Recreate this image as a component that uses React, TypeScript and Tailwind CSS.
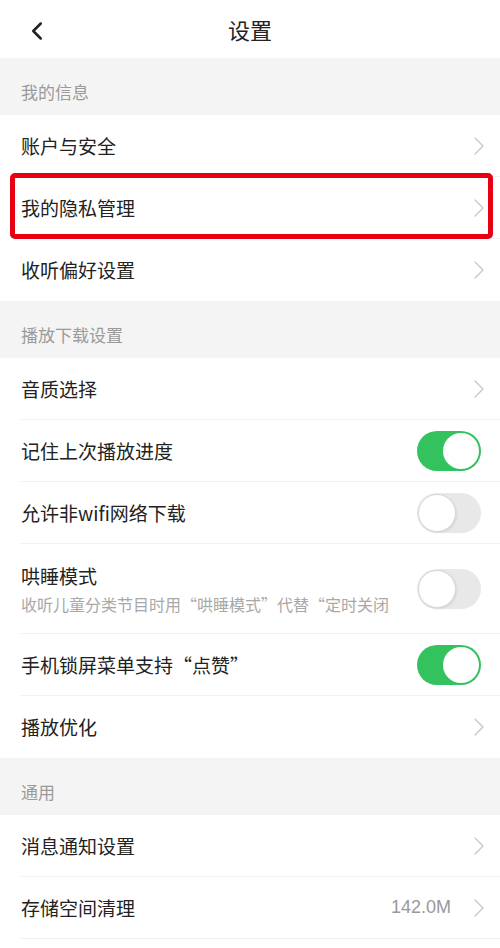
import { ChevronLeft, ChevronRight } from "lucide-react";

const font = { fontFamily: '"Noto Sans CJK SC", "Noto Sans", sans-serif' };

function Section({ title }: { title: string }) {
  return (
    <div className="h-[57px] bg-[#f4f4f4] flex items-center pt-[10px] pl-[21px] text-[17px] text-[#9a9a9a]">
      {title}
    </div>
  );
}

function Toggle({ on }: { on: boolean }) {
  return on ? (
    <div className="w-[64px] h-[40px] rounded-full bg-[#34c25e] flex items-center justify-end pr-[2px]">
      <div className="w-[36px] h-[36px] rounded-full bg-white" />
    </div>
  ) : (
    <div className="w-[64px] h-[40px] rounded-full bg-[#e8e8e8] flex items-center pl-[1px]">
      <div className="w-[38px] h-[38px] rounded-full bg-white border border-[#d8d8d8] shadow-[1px_1px_2px_rgba(0,0,0,0.08)]" />
    </div>
  );
}

function Row({
  label,
  sub,
  toggle,
  value,
  divider = true,
  highlight = false,
  tall = false,
}: {
  label: string;
  sub?: string;
  toggle?: boolean;
  value?: string;
  divider?: boolean;
  highlight?: boolean;
  tall?: boolean;
}) {
  return (
    <div className="relative bg-white">
      <div
        className={`flex items-center justify-between pl-[21px] ${toggle !== undefined ? "pr-[19px]" : "pr-[5px]"} ${tall ? "h-[89px]" : "h-[61px]"}`}
      >
        <div className="flex flex-col">
          <span className="text-[19px] text-[#222] leading-[26px]">{label}</span>
          {sub && (
            <span className="text-[16px] text-[#a8a8a8] leading-[22px] mt-[4px] whitespace-nowrap">{sub}</span>
          )}
        </div>
        {toggle !== undefined ? (
          <Toggle on={toggle} />
        ) : (
          <div className="flex items-center">
            {value && (
              <span className="text-[18px] text-[#999] mr-[12px]" style={{ fontFamily: '"Liberation Sans", sans-serif' }}>
                {value}
              </span>
            )}
            <ChevronRight className="w-[32px] h-[32px] -mr-[0px] text-[#c8c8c8]" strokeWidth={1} />
          </div>
        )}
      </div>
      <div className={`ml-[21px] h-px ${divider ? "bg-[#f0f0f0]" : "bg-white"}`} />
      {highlight && (
        <div className="absolute left-[10px] right-[7px] top-[-4px] bottom-[0px] border-[5px] border-[#e60012] rounded-[5px]" />
      )}
    </div>
  );
}

export default function App() {
  return (
    <div className="w-[500px] h-[948px] bg-white overflow-hidden" style={font}>
      <div className="h-[58px] relative flex items-center justify-center">
        <ChevronLeft className="absolute left-[22px] top-[16px] w-[30px] h-[30px] text-[#222]" strokeWidth={2} />
        <span className="text-[22px] text-[#222]">设置</span>
      </div>
      <Section title="我的信息" />
      <Row label="账户与安全" />
      <Row label="我的隐私管理" highlight />
      <Row label="收听偏好设置" divider={false} />
      <Section title="播放下载设置" />
      <Row label="音质选择" />
      <Row label="记住上次播放进度" toggle={true} />
      <Row label="允许非wifi网络下载" toggle={false} />
      <Row label="哄睡模式" sub="收听儿童分类节目时用“哄睡模式”代替“定时关闭" toggle={false} tall />
      <Row label="手机锁屏菜单支持“点赞”" toggle={true} />
      <Row label="播放优化" divider={false} />
      <Section title="通用" />
      <Row label="消息通知设置" />
      <Row label="存储空间清理" value="142.0M" />
      <Row label="" divider={false} />
    </div>
  );
}
